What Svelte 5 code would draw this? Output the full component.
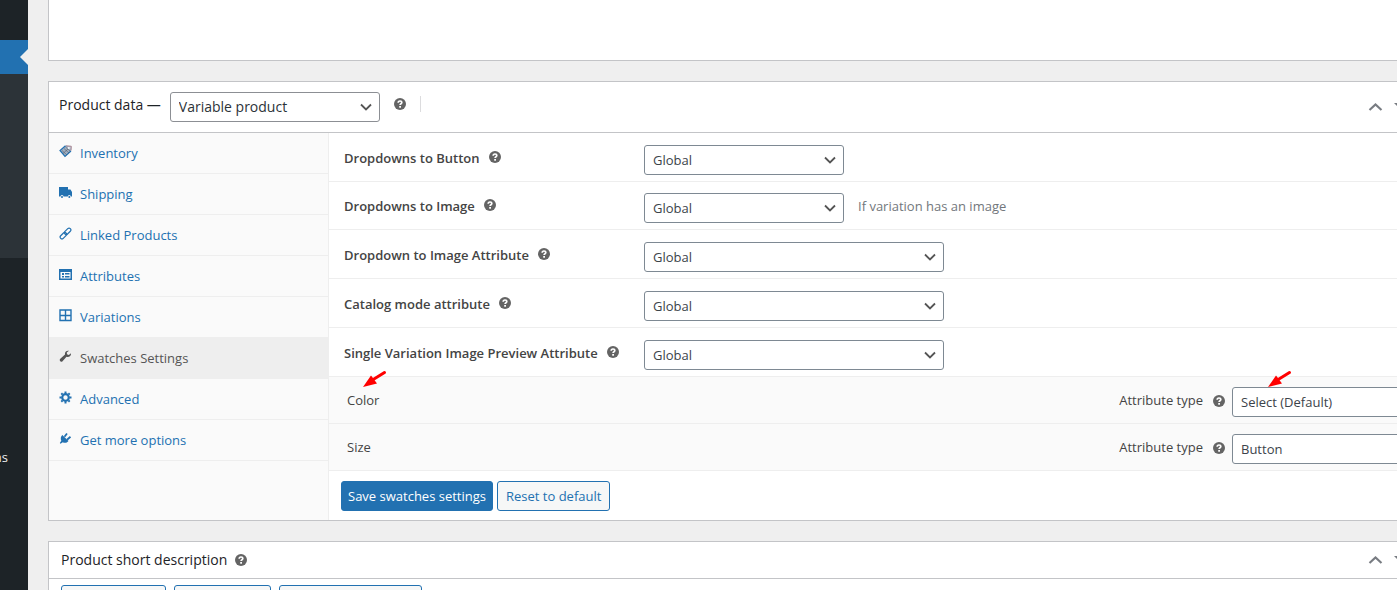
<script>
    const tabs = [
        { name: 'Inventory', icon: 'tag' },
        { name: 'Shipping', icon: 'truck' },
        { name: 'Linked Products', icon: 'link' },
        { name: 'Attributes', icon: 'list' },
        { name: 'Variations', icon: 'grid' },
        { name: 'Swatches Settings', icon: 'wrench' },
        { name: 'Advanced', icon: 'gear' },
        { name: 'Get more options', icon: 'plug' }
    ];

    const options = [
        { id: 'to-button', label: 'Dropdowns to Button' },
        { id: 'to-image', label: 'Dropdowns to Image', note: 'If variation has an image' },
        { id: 'image-attribute', label: 'Dropdown to Image Attribute', wide: true },
        { id: 'catalog-attribute', label: 'Catalog mode attribute', wide: true },
        { id: 'preview-attribute', label: 'Single Variation Image Preview Attribute', wide: true }
    ];

    const attributes = [
        { name: 'Color', type: 'Select (Default)', marked: true },
        { name: 'Size', type: 'Button', marked: false }
    ];

    let activeTab = $state('Swatches Settings');
</script>

{#snippet help()}
    <svg class="help" viewBox="0 0 12 12" width="12" height="12" role="img" aria-label="Help">
        <circle cx="6" cy="6" r="6" fill="#646464" />
        <path d="M4.2 4.7C4.2 2.4 7.8 2.5 7.8 4.6C7.8 5.8 6.1 5.7 6.1 7.1" fill="none" stroke="#fff" stroke-width="1.7" />
        <rect x="5.2" y="8" width="1.8" height="1.7" fill="#fff" />
    </svg>
{/snippet}

{#snippet arrow(place)}
    <svg class="arrow {place}" viewBox="0 0 24 18" width="24" height="18" aria-hidden="true">
        <path d="M21.500 2.500L11 9" stroke="#f00" stroke-width="3" stroke-linecap="round" />
        <path d="M0 17L8 5.500L10 8L12.500 11.500L14 13.500Z" fill="#f00" />
    </svg>
{/snippet}

{#snippet boxActions(name)}
    <div class="actions">
        <button type="button" aria-label="Move {name} up">
            <svg viewBox="0 0 20 20" width="20" height="20"><path d="M4.500 13L10.500 7.500L16.500 13" fill="none" stroke="#787c82" stroke-width="2.200" /></svg>
        </button>
        <button type="button" aria-label="Toggle {name}">
            <svg viewBox="0 0 20 20" width="20" height="20"><path d="M4 6h12l-6 6z" fill="#787c82" /></svg>
        </button>
    </div>
{/snippet}

{#snippet tabIcon(icon)}
    <svg class="icon" viewBox="0 0 13 13" width="13" height="13" fill="currentColor" aria-hidden="true">
        {#if icon === 'tag'}
            <path d="M1 5.500L6.500 .8L11.500 1.500L12 6L6 11.500Z" fill="#9fb0c4" />
            <path d="M6.500 .8L1 5.500L6 11.500L12 6" fill="none" stroke="currentColor" stroke-width="1.200" />
            <path d="M3 5.500L8 10M5 3.500L10 8M6.500 2L11 6M4 8.500L9.500 3.500" fill="none" stroke="#50575e" stroke-width=".8" opacity=".7" />
            <path d="M7 .8L12.300 1.300L12 5.500" fill="none" stroke="#a07f8c" stroke-width="1" />
            <circle cx="9.800" cy="3" r="1.100" fill="#fafafa" />
        {:else if icon === 'truck'}
            <path d="M0 1h9v2.500h2.500l1.500 2.500v4.500h-1.200a1.500 1.500 0 0 0-3 0H4.500a1.500 1.500 0 0 0-3 0H0z" />
            <circle cx="3" cy="11" r="1" /><circle cx="10.300" cy="11" r="1" />
        {:else if icon === 'link'}
            <g transform="rotate(-45 6.500 6.500)" fill="none" stroke="currentColor" stroke-width="1.200">
                <rect x="-.3" y="4.700" width="7.500" height="3.600" rx="1.800" />
                <rect x="5.800" y="4.700" width="7.500" height="3.600" rx="1.800" />
            </g>
        {:else if icon === 'list'}
            <path fill-rule="evenodd" d="M0 1h13v11H0zM1.500 4v6.500h10V4z" />
            <path d="M3 5h2v2H3zM6 5h4.500v1.500H6zM3 8h2v1.500H3zM6 8h4.500v1.500H6z" />
        {:else if icon === 'grid'}
            <path d="M1 1h11v10.500H1zM6.500 1v10.500M1 6.500h11" fill="none" stroke="currentColor" stroke-width="1.400" />
        {:else if icon === 'wrench'}
            <path d="M12 3.200L9.800 5L8 4.300L7.800 2.500L10 .8C7.500 .3 5.500 2 6 4.500L1 9C0 10.500 1.800 12.600 3.300 11.400L7.500 6.800C10 7.600 12.400 5.600 12 3.200Z" />
        {:else if icon === 'gear'}
            <circle cx="6.500" cy="6.500" r="3.300" fill="none" stroke="currentColor" stroke-width="2.200" />
            <path d="M6.500 .5v2M6.500 10.500v2M.5 6.500h2M10.500 6.500h2M2.300 2.300l1.300 1.300M9.400 9.400l1.300 1.300M10.700 2.300L9.400 3.600M3.600 9.400l-1.300 1.300" stroke="currentColor" stroke-width="2" />
        {:else}
            <path d="M3.300 3L9.500 9C8 11 5.500 11.300 3.800 10.300L1.500 11.800L.8 11L2.300 8.800C1.300 6.500 1.800 4.500 3.300 3Z" />
            <path d="M5.500 4.800L8 1.500M8 7.800L11.500 4.800" stroke="currentColor" stroke-width="1.800" />
        {/if}
    </svg>
{/snippet}

<div class="admin">
    <nav class="menu" aria-label="Admin menu">
        <div class="current"></div>
        <div class="submenu"></div>
        <a href="#options">ns</a>
    </nav>

    <main>
        <section class="box editor"></section>

        <section class="box">
            <header class="data-header">
                <label for="product-type">Product data —</label>
                <select id="product-type" class="product-type">
                    <option>Variable product</option>
                </select>
                {@render help()}
                <span class="divider"></span>
                {@render boxActions('Product data')}
            </header>

            <div class="data-body">
                <ul class="tabs">
                    {#each tabs as tab}
                        <li class:active={tab.name === activeTab}>
                            <a href="#{tab.icon}" onclick={() => (activeTab = tab.name)}>
                                {@render tabIcon(tab.icon)}
                                <span>{tab.name}</span>
                            </a>
                        </li>
                    {/each}
                </ul>

                <div class="panel">
                    {#each options as option}
                        <div class="option" class:noted={option.note}>
                            <div class="option-label">
                                <label for={option.id}>{option.label}</label>
                                {@render help()}
                            </div>
                            <select id={option.id} class:wide={option.wide}>
                                <option>Global</option>
                            </select>
                            {#if option.note}
                                <span class="note">{option.note}</span>
                            {/if}
                        </div>
                    {/each}

                    {#each attributes as attribute}
                        <div class="attribute">
                            <span class="attribute-name">{attribute.name}</span>
                            <div class="attribute-type">
                                <label for="type-{attribute.name}">Attribute type</label>
                                {@render help()}
                                <select id="type-{attribute.name}">
                                    <option>{attribute.type}</option>
                                </select>
                                {#if attribute.marked}
                                    {@render arrow('at-type')}
                                {/if}
                            </div>
                            {#if attribute.marked}
                                {@render arrow('at-name')}
                            {/if}
                        </div>
                    {/each}

                    <div class="buttons">
                        <button type="button" class="button primary">Save swatches settings</button>
                        <button type="button" class="button">Reset to default</button>
                    </div>
                </div>
            </div>
        </section>

        <section class="box">
            <header class="short-header">
                <h2>Product short description</h2>
                {@render help()}
                {@render boxActions('Product short description')}
            </header>
            <div class="media">
                <button type="button" class="button" aria-label="Add media"></button>
                <button type="button" class="button" aria-label="Add form"></button>
                <button type="button" class="button" aria-label="Add shortcode"></button>
            </div>
        </section>
    </main>
</div>

<style>
    :global(body) {
        background: #efefef;
    }

    .admin {
        display: flex;
        height: 100vh;
        overflow: hidden;
        font-family: "Open Sans", "Noto Sans", sans-serif;
        font-size: 13px;
        line-height: 20px;
        color: #50575e;
    }

    .menu {
        flex: 0 0 28px;
        box-sizing: border-box;
        padding-top: 40px;
        overflow: hidden;
        background: #1d2327;
    }

    /* the label runs out of the left side of the menu */
    .menu a {
        display: block;
        margin-top: 189px;
        padding-right: 20px;
        direction: rtl;
        color: #f0f0f1;
        text-align: right;
        text-decoration: none;
    }

    .current {
        position: relative;
        height: 34px;
        background: #2271b1;
    }

    .current::after {
        content: "";
        position: absolute;
        top: 9px;
        right: 0;
        border: 8px solid transparent;
        border-right-color: #efefef;
        border-left: 0;
    }

    .submenu {
        height: 184px;
        background: #2c3338;
    }

    main {
        flex: 1;
        min-width: 0;
        padding-left: 20px;
    }

    .box {
        margin: 0 -40px 20px 0;
        border: 1px solid #c3c4c7;
        background: #fff;
    }

    .editor {
        height: 60px;
        border-top: 0;
    }

    header {
        display: flex;
        align-items: center;
        border-bottom: 1px solid #c3c4c7;
        font-size: 14px;
        font-weight: 500;
        color: #1d2327;
    }

    .data-header {
        height: 50px;
        padding-left: 10px;
    }

    .data-header label {
        padding-bottom: 4px;
    }

    .data-header .help,
    .divider {
        margin-bottom: 6px;
    }

    .short-header {
        height: 36px;
        padding-left: 12px;
    }

    h2 {
        margin: 0 8px 0 0;
        font-size: 14px;
        font-weight: 500;
    }

    .help {
        flex: none;
    }

    .divider {
        height: 16px;
        margin-left: 14px;
        border-left: 1px solid #dcdcde;
    }

    .actions {
        display: flex;
        gap: 5px;
        margin-left: auto;
        padding-right: 26px;
    }

    .actions button {
        display: flex;
        padding: 0;
        border: 0;
        background: none;
    }

    select {
        box-sizing: border-box;
        width: 200px;
        height: 30px;
        padding: 0 24px 0 8px;
        appearance: none;
        border: 1px solid #7e8993;
        border-radius: 3px;
        background: #fff url('data:image/svg+xml,<svg xmlns="http://www.w3.org/2000/svg" viewBox="0 0 12 8"><path d="M1 1.500l5 5 5-5" fill="none" stroke="%23555" stroke-width="1.800"/></svg>') no-repeat right 7px center / 12px 8px;
        font: inherit;
        color: #3c434a;
    }

    select.wide {
        width: 300px;
    }

    .product-type {
        width: 210px;
        margin: 0 14px 0 9px;
        border-color: #8c8f94;
        color: #2c3338;
    }

    .data-body {
        display: flex;
    }

    .tabs {
        flex: 0 0 279px;
        margin: 0;
        padding: 0;
        list-style: none;
        border-right: 1px solid #eee;
        background: #fafafa;
    }

    .tabs a {
        display: flex;
        gap: 8px;
        padding: 10px;
        border-bottom: 1px solid #eee;
        color: #2271b1;
        text-decoration: none;
    }

    .tabs .icon {
        margin-top: 2px;
    }

    .tabs .active a {
        background: #eee;
        color: #555;
    }

    .panel {
        flex: 1;
    }

    .option {
        display: flex;
        padding: 12px 0 6px 15px;
        border-bottom: 1px solid #eee;
    }

    .option.noted {
        padding-top: 11px;
    }

    .option-label {
        display: flex;
        flex: 0 0 300px;
        gap: 9px;
        padding-top: 3px;
        font-weight: 600;
        color: #444;
    }

    .option-label .help {
        margin-top: 3px;
    }

    .note {
        margin: 3px 0 0 14px;
        color: #72777c;
    }

    .attribute {
        position: relative;
        display: flex;
        justify-content: space-between;
        padding: 10px 4px 6px 18px;
        border-bottom: 1px solid #eee;
        background: #fafafa;
        color: #444;
    }

    .attribute-name,
    .attribute-type label {
        padding-top: 3px;
    }

    .attribute-type {
        position: relative;
        display: flex;
    }

    .attribute-type .help {
        margin: 8px 7px 0 10px;
    }

    .arrow {
        position: absolute;
    }

    .at-name {
        top: -7px;
        left: 34px;
    }

    .at-type {
        top: -17px;
        right: 140px;
    }

    .buttons {
        display: flex;
        gap: 4px;
        padding: 10px 12px 9px;
    }

    .button {
        height: 30px;
        padding: 0 8px;
        border: 1px solid #2271b1;
        border-radius: 3px;
        background: #f6f7f7;
        font: inherit;
        color: #2271b1;
    }

    .button.primary {
        padding: 0 6px;
        background: #2271b1;
        color: #fff;
    }

    .media {
        display: flex;
        gap: 8px;
        padding: 6px 12px;
    }

    .media .button {
        width: 105px;
    }

    .media .button:nth-child(2) {
        width: 97px;
    }

    .media .button:nth-child(3) {
        width: 143px;
    }
</style>
